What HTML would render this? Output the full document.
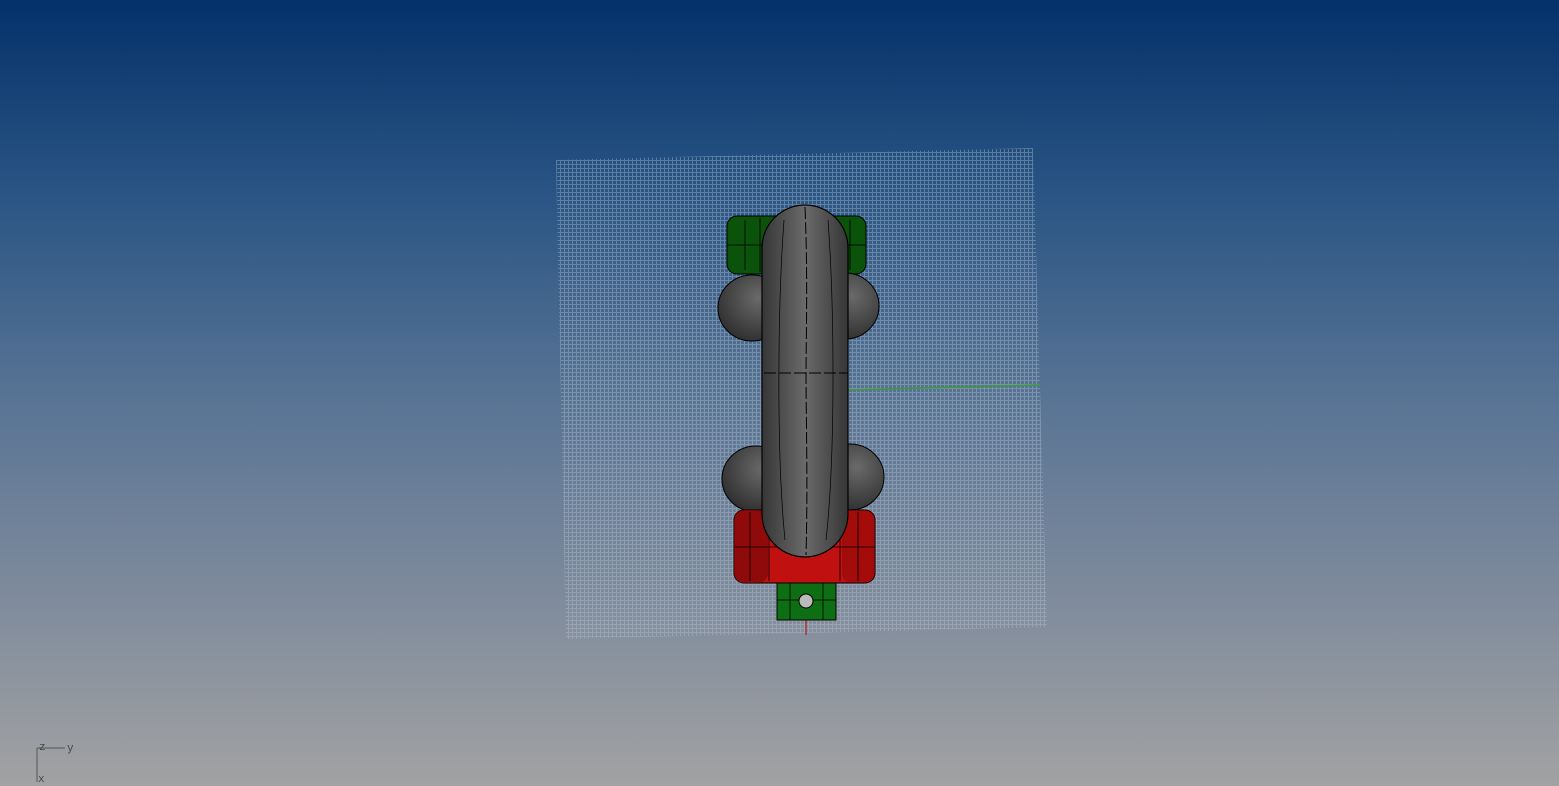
<!DOCTYPE html>
<html><head><style>
html,body{margin:0;padding:0;width:1559px;height:786px;overflow:hidden;}
body{background:linear-gradient(to bottom,#04316a 0%,#2a5584 25%,#577394 50%,#7d8a9c 75%,#a2a2a2 100%);}
svg{position:absolute;left:0;top:0;}
</style></head><body>
<svg width="1559" height="786" viewBox="0 0 1559 786" font-family="Liberation Mono, monospace">
<defs>
<pattern id="g" width="4" height="4" patternUnits="userSpaceOnUse">
<path d="M0 0.5H4M0.5 0V4" stroke="#b8c4d2" stroke-width="1" opacity="0.38"/>
</pattern>
<clipPath id="c"><polygon points="556,160 1033,148 1047,627 566,639"/></clipPath>
<radialGradient id="sph" cx="0.6" cy="0.35" r="0.7"><stop offset="0" stop-color="#6a6a6a"/><stop offset="1" stop-color="#2e2e2e"/></radialGradient>
<linearGradient id="tor" x1="0" x2="1"><stop offset="0" stop-color="#363636"/><stop offset="0.5" stop-color="#6a6a6a"/><stop offset="1" stop-color="#363636"/></linearGradient>
</defs>
<g clip-path="url(#c)"><rect x="550" y="140" width="510" height="510" fill="url(#g)"/></g>
<line x1="848" y1="390" x2="1040" y2="385" stroke="#3a9a3a" stroke-width="1.5"/>
<line x1="806" y1="600" x2="806" y2="635" stroke="#b03030" stroke-width="1.5"/>
<rect x="727" y="216" width="139" height="58" rx="10" fill="#0b520b" stroke="#000" stroke-width="1"/>
<path d="M745 220V270M760 218V272M835 218V272M850 220V270M727 245H866" stroke="#000" stroke-width="0.8"/>
<ellipse cx="752" cy="308" rx="34" ry="33" fill="url(#sph)" stroke="#000"/>
<ellipse cx="845" cy="306" rx="34" ry="33" fill="url(#sph)" stroke="#000"/>
<ellipse cx="756" cy="479" rx="34" ry="33" fill="url(#sph)" stroke="#000"/>
<ellipse cx="850" cy="477" rx="34" ry="33" fill="url(#sph)" stroke="#000"/>
<rect x="734" y="510" width="141" height="73" rx="10" fill="#c01010" stroke="#000"/>
<rect x="734" y="510" width="34" height="73" rx="10" fill="#7a0808" opacity="0.7"/>
<rect x="842" y="510" width="33" height="73" rx="10" fill="#7a0808" opacity="0.4"/>
<path d="M750 512V581M769 512V581M840 512V581M858 512V581M734 547H875" stroke="#000" stroke-width="0.8"/>
<rect x="777" y="583" width="59" height="37" fill="#0e6e14" stroke="#000"/>
<path d="M790 583V620M823 583V620M777 600H836" stroke="#000" stroke-width="0.8"/>
<circle cx="806" cy="601" r="7" fill="#bbb" stroke="#000"/>
<rect x="762" y="205" width="86" height="352" rx="43" fill="url(#tor)" stroke="#000" stroke-width="1.2"/>
<path d="M764 373H848M805 207C808 280 806 340 806 373C806 420 808 480 806 555" stroke="#000" stroke-width="1" fill="none" stroke-dasharray="12 3"/>
<path d="M784 220C778 300 776 450 785 540M828 220C834 300 836 450 826 540" stroke="#000" stroke-width="0.7" fill="none"/>
<path d="M37 748V782M37 748H65" stroke="#555" stroke-width="1"/>
<text x="39" y="750" font-size="11" fill="#444">z</text>
<text x="67" y="751" font-size="11" fill="#444">y</text>
<text x="38" y="782" font-size="11" fill="#444">x</text>
</svg>
</body></html>
